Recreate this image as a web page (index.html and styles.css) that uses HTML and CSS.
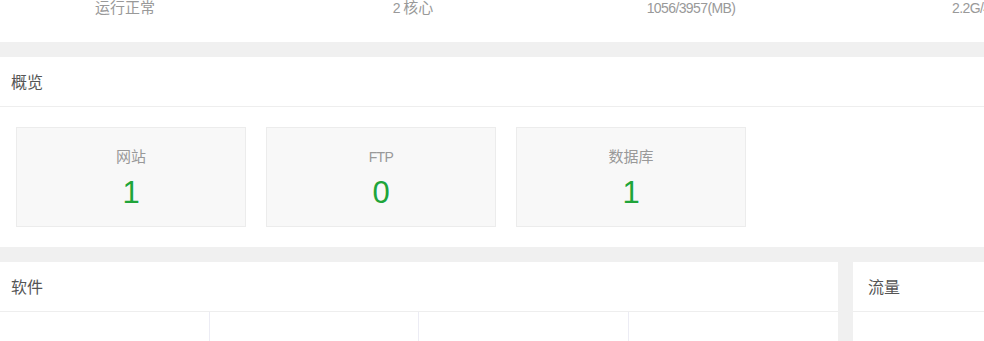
FILE: index.html
```html
<!DOCTYPE html>
<html lang="zh-CN">
<head>
<meta charset="utf-8">
<title>首页</title>
<link rel="stylesheet" href="styles.css">
</head>
<body>
<div class="page">
  <section class="status">
    <div class="stat">运行正常</div>
    <div class="stat"><span class="num">2 </span>核心</div>
    <div class="stat"><span class="num">1056/3957(MB)</span></div>
    <div class="stat"><span class="num">2.2G/40G</span></div>
  </section>

  <section class="panel overview">
    <div class="panel-title">概览</div>
    <div class="cards">
      <div class="card">
        <div class="card-label">网站</div>
        <div class="card-num">1</div>
      </div>
      <div class="card">
        <div class="card-label latin">FTP</div>
        <div class="card-num">0</div>
      </div>
      <div class="card">
        <div class="card-label">数据库</div>
        <div class="card-num">1</div>
      </div>
    </div>
  </section>

  <div class="row">
    <section class="panel soft">
      <div class="panel-title">软件</div>
      <div class="soft-grid">
        <div class="soft-cell"></div>
        <div class="soft-cell"></div>
        <div class="soft-cell"></div>
        <div class="soft-cell"></div>
      </div>
    </section>
    <section class="panel flow">
      <div class="panel-title">流量</div>
      <div class="flow-body"><span class="flow-legend">上行 下行</span></div>
    </section>
  </div>
</div>
</body>
</html>
```

FILE: styles.css
```css
html, body {
  margin: 0;
  padding: 0;
  overflow: hidden;
  background: #f0f0f0;
}

body {
  font-family: "Liberation Sans", "Noto Sans CJK SC", sans-serif;
}

.page {
  width: 1300px;
}

.status {
  background: #fff;
  height: 42px;
  display: grid;
  grid-template-columns: 282px 294px 262px 316px;
  margin-left: -16px;
}

.stat {
  text-align: center;
  font-size: 15px;
  line-height: 16px;
  color: #999;
}

.num {
  font-size: 14px;
  letter-spacing: -0.6px;
}

.panel {
  background: #fff;
}

.overview {
  margin-top: 15px;
}

.panel-title {
  height: 49px;
  line-height: 52px;
  border-bottom: 1px solid #eee;
  padding-left: 11px;
  font-size: 16px;
  color: #555;
}

.cards {
  display: flex;
  gap: 20px;
  padding: 20px 16px;
}

.card {
  width: 230px;
  height: 100px;
  box-sizing: border-box;
  border: 1px solid #ececec;
  background: #f8f8f8;
  text-align: center;
  padding-top: 19px;
}

.card-label {
  font-size: 15px;
  line-height: 20px;
  color: #999;
}

.card-label.latin {
  font-size: 14px;
  letter-spacing: -0.6px;
}

.card-num {
  font-size: 31px;
  line-height: 36px;
  margin-top: 8px;
  color: #20a53a;
}

.row {
  display: flex;
  gap: 15px;
  margin-top: 15px;
}

.soft {
  width: 838px;
}

.flow {
  width: 447px;
}

.flow .panel-title {
  padding-left: 15px;
}

.soft-grid {
  display: grid;
  grid-template-columns: repeat(4, 1fr);
  height: 120px;
}

.soft-cell {
  border-right: 1px solid #ececf4;
}

.soft-cell:last-child {
  border-right: none;
}

.flow-body {
  height: 120px;
  padding: 27px 0 0 104px;
  box-sizing: border-box;
}

.flow-legend {
  font-size: 12px;
  line-height: 14px;
  color: #888;
}
```
